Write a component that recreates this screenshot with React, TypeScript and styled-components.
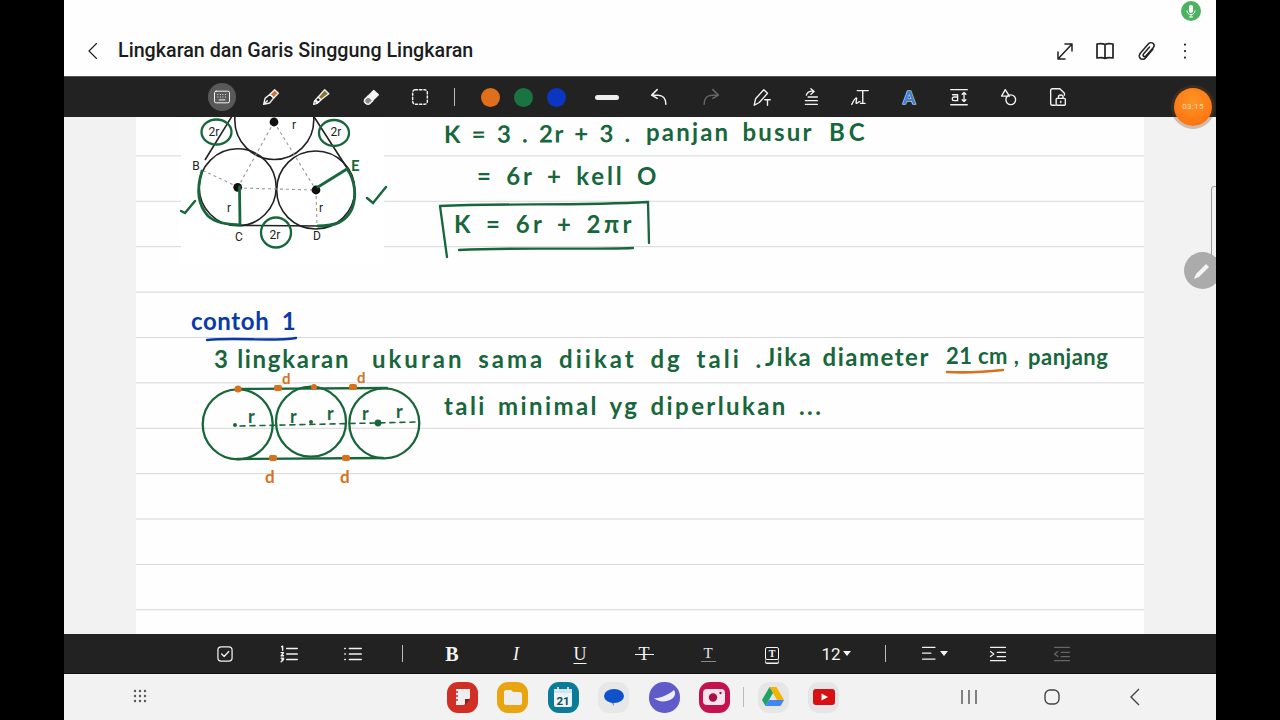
import React from "react";
import styled, { createGlobalStyle } from "styled-components";

const Global = createGlobalStyle`
  html, body { margin: 0; padding: 0; background: #000; width: 1280px; height: 720px; overflow: hidden; }
  #root { width: 1280px; height: 720px; }
`;

const Screen = styled.div`
  width: 1280px; height: 720px; background: #000;
  display: flex; justify-content: center;
  font-family: Roboto, "Liberation Sans", sans-serif;
`;
const Tablet = styled.div`
  position: relative; width: 1152px; height: 720px; overflow: hidden;
  display: flex; flex-direction: column; background: #f2f2f2;
`;
const Header = styled.header`
  height: 76px; flex: none; background: #fefefe; box-sizing: border-box;
  padding: 25px 19px 0 20px; display: flex; align-items: center;
`;
const BackButton = styled.div`
  width: 20px; height: 24px; display: flex; align-items: center; justify-content: center; margin-right: 14px;
`;
const Title = styled.h1`
  margin: 0; font: 500 19.7px/24px Roboto, sans-serif; color: #1c1c1c; flex: 1;
`;
const HeaderActions = styled.div`
  display: flex; align-items: center; gap: 16px;
`;
const HeaderIcon = styled.div<{ $nudge?: number }>`
  width: 24px; height: 24px; display: flex;
  margin-left: ${(p) => p.$nudge ?? 0}px; margin-right: ${(p) => -(p.$nudge ?? 0)}px;
`;
const Toolbar = styled.nav`
  height: 41px; flex: none; background: #222; border-top: 1px solid #555; box-sizing: border-box;
  display: flex; align-items: center; padding-left: 133px;
`;
const Slot = styled.div<{ $w?: number; $ml?: number }>`
  width: ${(p) => p.$w ?? 49.6}px; margin-left: ${(p) => p.$ml ?? 0}px; height: 36px; flex: none;
  display: flex; align-items: center; justify-content: center;
`;
const ActiveKey = styled.div`
  width: 28px; height: 28px; border-radius: 50%; background: #595959;
  display: flex; align-items: center; justify-content: center;
`;
const Swatch = styled.div<{ $c: string }>`
  width: 19px; height: 19px; border-radius: 50%; background: ${(p) => p.$c};
`;
const Divider = styled.div<{ $h?: number }>`
  width: 1px; height: ${(p) => p.$h ?? 18}px; background: #bbb;
`;
const WidthBar = styled.div`
  width: 24px; height: 5px; border-radius: 3px; background: #eee;
`;
const Workspace = styled.main`
  height: 517px; flex: none; display: flex; justify-content: center; background: #f2f2f2;
`;
const Page = styled.section`
  position: relative; width: 1008px; height: 517px; overflow: hidden;
  background-color: #fefefe;
  background-image: linear-gradient(to bottom, transparent 44.2px, #d6d6d6 44.2px, #d6d6d6 45.4px);
  background-size: 100% 45.4px;
  background-position: 0 -6px;
`;
const Patch = styled.div`
  position: absolute; left: 45px; top: 0; width: 203px; height: 148px; background: #fff;
`;
const InkLayer = styled.svg`
  position: absolute; left: 0; top: 0; width: 1008px; height: 517px;
`;
const Ink = styled.span<{ $x: number; $y: number; $s: number; $ls: number; $c?: string; $r?: number; $ws?: number }>`
  position: absolute; left: ${(p) => p.$x - 136}px; top: ${(p) => p.$y - 117}px;
  font: 700 ${(p) => p.$s}px/1 Lato, "Open Sans", sans-serif;
  letter-spacing: ${(p) => p.$ls}px; word-spacing: ${(p) => p.$ws ?? 0}px;
  color: ${(p) => p.$c ?? "#17663c"}; white-space: nowrap;
  transform: rotate(${(p) => p.$r ?? 0}deg); transform-origin: left center;
`;
const FormatBar = styled.nav`
  height: 39px; flex: none; background: #222; border-bottom: 1px solid #111; box-sizing: content-box;
  display: flex; align-items: center; padding-left: 129px;
`;
const FormatSlot = styled.div<{ $w?: number }>`
  width: ${(p) => p.$w ?? 64}px; height: 34px; flex: none; display: flex; align-items: center; justify-content: center;
`;
const Glyph = styled.span<{ $italic?: boolean; $bold?: boolean; $u?: boolean }>`
  font: ${(p) => (p.$italic ? "italic " : "")}${(p) => (p.$bold ? 700 : 400)} ${(p) => (p.$bold ? 20 : 18)}px/20px "Liberation Serif", serif;
  color: #f4f4f4;
  text-decoration: ${(p) => (p.$u ? "underline" : "none")};
  text-underline-offset: 3px;
`;
const StrikeGlyph = styled.span`
  position: relative; font: 400 18px/20px "Liberation Serif", serif; color: #f4f4f4;
  &::after {
    content: ""; position: absolute; left: -4px; right: -4px; top: 10px; height: 1.5px; background: #f4f4f4;
  }
`;
const BoxedGlyph = styled.span`
  display: inline-flex; width: 12px; height: 11px; border: 1.3px solid #f4f4f4; border-radius: 2px;
  align-items: center; justify-content: center; font: 700 10px/1 "Liberation Serif", serif; color: #f4f4f4;
  box-shadow: 0 3px 0 -0.5px #222, 0 4px 0 0 #f4f4f4;
`;
const UnderGlyph = styled.span`
  display: inline-flex; width: 15px; justify-content: center; border-bottom: 1.5px solid #888;
  font: 400 15px/14px "Liberation Serif", serif; color: #e6e6e6; padding-bottom: 1px;
`;
const SizeLabel = styled.span`
  font: 400 17px/20px Roboto, sans-serif; color: #f4f4f4; display: flex; align-items: center; gap: 2px;
`;
const Caret = styled.i`
  width: 0; height: 0; border-left: 4px solid transparent; border-right: 4px solid transparent; border-top: 5px solid #f4f4f4;
`;
const Dock = styled.footer`
  height: 46px; flex: none; background: #f2f2f2; display: flex; align-items: center; padding-left: 66px;
`;
const DockGrid = styled.div`
  width: 22px; flex: none; display: flex; justify-content: center;
`;
const Apps = styled.div`
  display: flex; align-items: center; margin-left: 295px;
`;
const AppTile = styled.div<{ $bg: string; $r?: number }>`
  width: 31px; height: 31px; border-radius: ${(p) => p.$r ?? 11}px; background: ${(p) => p.$bg}; flex: none;
  margin-right: 19.4px; display: flex; align-items: center; justify-content: center; overflow: hidden;
`;
const DockDivider = styled.div`
  width: 1px; height: 20px; background: #bbb; margin: 0 13.5px 0 -6px;
`;
const NavKeys = styled.div`
  display: flex; align-items: center; margin-left: 98.5px; gap: 59px;
`;
const MicDot = styled.div`
  position: absolute; left: 1117px; top: 1px; width: 20px; height: 20px; border-radius: 50%; background: #4cb25f;
  display: flex; align-items: center; justify-content: center;
`;
const TimerBubble = styled.div`
  position: absolute; left: 1110px; top: 88px; width: 38px; height: 38px; border-radius: 50%;
  background: radial-gradient(circle at 50% 35%, #ff9526, #fb6a0c);
  box-shadow: 0 0 0 3px rgba(120, 70, 30, 0.3);
  display: flex; align-items: center; justify-content: center;
  font: 400 8px/1 Roboto, sans-serif; color: #ffd9b3; letter-spacing: 0.3px;
`;
const EdgeHandle = styled.div`
  position: absolute; left: 1147px; top: 186px; width: 12px; height: 72px;
  border: 1px solid #9a9a9a; border-radius: 3px; box-sizing: border-box;
`;
const PenFab = styled.div`
  position: absolute; left: 1120px; top: 252px; width: 37px; height: 37px; border-radius: 50%; background: #ababab;
  display: flex; align-items: center; padding-left: 8px; box-sizing: border-box;
`;

const S = (p: { size?: number; children: React.ReactNode; c?: string; w?: number }) => (
  <svg width={p.size ?? 22} height={p.size ?? 22} viewBox="0 0 24 24" fill="none" stroke={p.c ?? "#f2f2f2"}
    strokeWidth={p.w ?? 1.5} strokeLinecap="round" strokeLinejoin="round">{p.children}</svg>
);

const G = "#17663c";
const O = "#d8701c";

const NoteDrawings = () => (
  <InkLayer viewBox="136 117 1008 517">
    <g fill="none" stroke="#222" strokeWidth="1.6">
      <circle cx="274.3" cy="120" r="39.5" />
      <circle cx="237.7" cy="187.3" r="38.5" />
      <circle cx="315.7" cy="190" r="39" />
      <path d="M231.7 116.7 L205 160 M314 116.7 L348.3 170 M240 225.4 L320 226" />
    </g>
    <g fill="none" stroke="#999" strokeWidth="1.1" strokeDasharray="3 3">
      <path d="M274 122 L238 187 M274 122 L316 190 M238 188 L316 190 M238 187 L204 171 M316 190 L317 225" />
    </g>
    <g fill="#111">
      <circle cx="274" cy="122" r="4.4" /><circle cx="237.7" cy="187.3" r="4.4" /><circle cx="316" cy="190" r="4.4" />
    </g>
    <g fontFamily="Roboto, sans-serif" fontSize="12" fill="#222" textAnchor="middle">
      <text x="196" y="170">B</text><text x="239" y="241">C</text><text x="317" y="240">D</text>
      <text x="229" y="212">r</text><text x="321" y="212">r</text><text x="294" y="129">r</text>
      <text x="214" y="136">2r</text><text x="336" y="136">2r</text><text x="275" y="239">2r</text>
    </g>
    <g fill="none" stroke={G} strokeLinecap="round" strokeWidth="2.3">
      <ellipse cx="216.5" cy="132" rx="15" ry="12.5" />
      <ellipse cx="334" cy="133" rx="15" ry="13" />
      <ellipse cx="276" cy="232.5" rx="15" ry="15" />
      <path d="M202 171 C196 190 198 205 208 216 C217 224 228 224 240 225 L239.5 187" strokeWidth="2.8" />
      <path d="M318 187 L347 169 C355 180 357 196 352 209 C346 222 335 226 318 226" strokeWidth="2.8" />
      <path d="M181 211 L185 213 L195 201 M367 198 L373 203 L386 187" strokeWidth="2.4" />
      <path d="M440 206 L447 257 M440 206 C500 203 580 206 648 202 L649 243 M459 250 C520 247 580 250 633 248" strokeWidth="2.3" />
      <circle cx="237.7" cy="424.3" r="35" />
      <circle cx="311" cy="421.7" r="35" />
      <circle cx="384.3" cy="423.3" r="35" />
      <path d="M238 389 L387 388 M237 459 L383 458" />
      <path d="M240 426 L418 422" strokeDasharray="5 5" strokeWidth="1.6" />
    </g>
    <g fill={G}><circle cx="235" cy="425" r="2" /><circle cx="311" cy="422" r="2" /><circle cx="378" cy="423" r="3.4" /></g>
    <path d="M207 340 C240 337 270 342 296 338" fill="none" stroke="#0a3aa8" strokeWidth="2.4" strokeLinecap="round" />
    <path d="M947 372 C965 373 985 372 1003 370" fill="none" stroke={O} strokeWidth="2.6" strokeLinecap="round" />
    <g fill={O}>
      <circle cx="238" cy="389" r="3.6" /><circle cx="314" cy="387" r="3" />
      <rect x="274" y="385" width="8" height="6" rx="2" /><rect x="349" y="384" width="8" height="6" rx="2" />
      <rect x="269" y="455" width="8" height="6" rx="2" /><rect x="342" y="455" width="8" height="6" rx="2" />
    </g>
  </InkLayer>
);

const Notes = () => (
  <>
    <Ink $x={351} $y={158} $s={15} $ls={0}>E</Ink>
    <Ink $x={444} $y={122} $s={24} $ls={1.7} $ws={2} $r={-0.3}>K = 3 . 2r + 3 .</Ink>
    <Ink $x={646} $y={120} $s={24} $ls={2.2} $ws={4}>panjan busur</Ink>
    <Ink $x={829} $y={120} $s={24} $ls={4}>BC</Ink>
    <Ink $x={477} $y={164} $s={24} $ls={2.8} $ws={4}>= 6r + kell O</Ink>
    <Ink $x={454} $y={212} $s={24} $ls={3.4} $ws={3}>K = 6r + 2πr</Ink>
    <Ink $x={191} $y={309} $s={24} $ls={0.6} $ws={6} $c="#0a3aa8">contoh 1</Ink>
    <Ink $x={214} $y={347} $s={24} $ls={1.7}>3 lingkaran</Ink>
    <Ink $x={372} $y={347} $s={24} $ls={3} $ws={5}>ukuran sama diikat dg tali .</Ink>
    <Ink $x={765} $y={345} $s={24} $ls={1.5} $ws={3}>Jika diameter</Ink>
    <Ink $x={946} $y={345} $s={22} $ls={0.4} $ws={0}>21 cm ,</Ink>
    <Ink $x={1028} $y={346} $s={22} $ls={0.5}>panjang</Ink>
    <Ink $x={444} $y={394} $s={24} $ls={2.4} $ws={3}>tali minimal yg diperlukan ...</Ink>
    <Ink $x={282} $y={371} $s={15} $ls={0} $c={O}>d</Ink>
    <Ink $x={357} $y={370} $s={15} $ls={0} $c={O}>d</Ink>
    <Ink $x={265} $y={468} $s={17} $ls={0} $c={O}>d</Ink>
    <Ink $x={340} $y={468} $s={17} $ls={0} $c={O}>d</Ink>
    <Ink $x={248} $y={407} $s={18} $ls={0}>r</Ink>
    <Ink $x={290} $y={407} $s={18} $ls={0}>r</Ink>
    <Ink $x={327} $y={404} $s={18} $ls={0}>r</Ink>
    <Ink $x={362} $y={404} $s={18} $ls={0}>r</Ink>
    <Ink $x={396} $y={402} $s={18} $ls={0}>r</Ink>
  </>
);

export default function App() {
  return (
    <Screen>
      <Global />
      <Tablet>
        <Header>
          <BackButton>
            <S size={24} c="#222" w={1.4}><path d="M15 3 L6 12 L15 21" /></S>
          </BackButton>
          <Title>Lingkaran dan Garis Singgung Lingkaran</Title>
          <HeaderActions>
            <HeaderIcon><S size={24} c="#222"><path d="M5 20 L19 5 M12 5 H19 V12 M5 13 V20 H12" /></S></HeaderIcon>
            <HeaderIcon><S size={24} c="#222" w={1.7}><path d="M12 5.5 C10 4.5 7 4.5 4 5 V19 C7 18.5 10 18.5 12 19.5 C14 18.5 17 18.5 20 19 V5 C17 4.5 14 4.5 12 5.5 Z M12 5.5 V19.5" /></S></HeaderIcon>
            <HeaderIcon $nudge={2}><S size={24} c="#222"><path d="M18 10 L10.5 19 C8.8 21 6 20.5 5 19 C4 17.5 4.2 15.5 5.5 14 L13.5 4.8 C14.8 3.4 17 3.4 18.2 4.5 C19.4 5.7 19.3 7.6 18 9 L10.8 17 C10 17.8 9 17.7 8.4 17.2 C7.8 16.6 7.9 15.7 8.5 15 L14.5 8" /></S></HeaderIcon>
            <HeaderIcon><S size={24} c="#222" w={2.2}><path d="M12 5.5 V5.6 M12 12 V12.1 M12 18.5 V18.6" /></S></HeaderIcon>
          </HeaderActions>
        </Header>

        <Toolbar>
          <Slot><ActiveKey><S size={20} w={1.2}><rect x="3" y="5" width="18" height="14" rx="2" /><path d="M7 9 H7.1 M10 9 H10.1 M13 9 H13.1 M16 9 H16.1 M7 12 H7.1 M10 12 H10.1 M13 12 H13.1 M16 12 H16.1 M8.5 15.5 H15.5" /></S></ActiveKey></Slot>
          <Slot><S size={22}><path d="M4 20 L5.5 13.5 L11 9 L15 13 L10.5 18.5 Z M4 20 L8 16" /><path d="M11 9 L16 4 L20 8 L15 13 Z" fill="#d0743a" stroke="#f2f2f2" /></S></Slot>
          <Slot><S size={22}><path d="M4 20 L5 16 L8 19 Z M6 15 L9 12 L12 15 L9 18 Z" /><path d="M9 12 L16 4 L20.5 8.5 L12 15 Z" fill="#8a7430" stroke="#f2f2f2" /></S></Slot>
          <Slot><S size={22}><path d="M5 15 L15 5 L20 9.5 L10 19.5 C8.5 20 7 19.5 6 18.5 C5 17.5 4.6 16 5 15 Z" fill="#f4f4f4" /><path d="M9 11 L14 16 L10 19.5 C8.5 20 7 19.5 6 18.5 C5 17.5 4.6 16 5 15 Z" fill="#888" /></S></Slot>
          <Slot><S size={22} w={1.6}><rect x="4" y="4" width="16" height="16" rx="3" strokeDasharray="2.4 2.2" /></S></Slot>
          <Slot $w={20}><Divider /></Slot>
          <Slot $w={33} $ml={8.7}><Swatch $c="#df6f1a" /></Slot>
          <Slot $w={33}><Swatch $c="#1a7441" /></Slot>
          <Slot $w={33}><Swatch $c="#0b36c2" /></Slot>
          <Slot $w={49.6} $ml={10}><WidthBar /></Slot>
          <Slot $w={52} $ml={1}><S size={22} w={1.7}><path d="M4 10 L10 4 M4 10 L10 13.5 M4 10 H11 C16 10 19.5 13.5 19.5 20" /></S></Slot>
          <Slot $w={52}><S size={22} c="#666" w={1.7}><path d="M20 10 L14 4 M20 10 L14 13.5 M20 10 H13 C8 10 4.5 13.5 4.5 20" /></S></Slot>
          <Slot $w={50}><S size={22}><path d="M3.5 21 L5 14 L14 4 L18 8 L9 18 Z" /><path d="M15 15 H21 M18 15 V21" /></S></Slot>
          <Slot $w={50} $ml={-2.5}><S size={22}><path d="M8 10 C9 6 13 5 16 6 M13 3 L16.5 6 L13 9 M10 12 H20 M7 16 H20 M7 20 H20" /></S></Slot>
          <Slot $w={49.6}><S size={22}><path d="M9 5 H21 M15 5 V19 M12.5 19 H17.5 M3 20 C5 16 7 13 8 13 C9 13 7 19 8 19 C9 19 10 17 12 17" /></S></Slot>
          <Slot $w={49.6}><svg width="22" height="24" viewBox="0 0 22 24"><text x="11" y="19" textAnchor="middle" fontFamily="Liberation Sans, sans-serif" fontWeight="700" fontSize="19" fill="#3d80d8" stroke="#f4f4f4" strokeWidth="1" paintOrder="stroke">A</text></svg></Slot>
          <Slot $w={49.6}><S size={22}><path d="M3 4 H21 M3 20.5 H21 M17.5 7 V17 M15.5 9 L17.5 7 L19.5 9 M15.5 15 L17.5 17 L19.5 15" /><path d="M5 9.5 H10.5 V16 M10.5 12 H6.5 C4 12 4 16 6.5 16 H10.5" /></S></Slot>
          <Slot $w={49.6}><S size={22}><path d="M9 4 L13.5 11 H5 Z" /><circle cx="15" cy="15" r="5.3" /></S></Slot>
          <Slot $w={49.6}><S size={22}><path d="M9 21 H6 C5 21 4 20 4 19 V5 C4 4 5 3 6 3 H14 L19 8 V10" /><rect x="10" y="13.5" width="10" height="7.5" rx="1" /><path d="M12.5 13.5 V12 C12.5 9 17.5 9 17.5 12 V13.5 M15 16.5 V18" /></S></Slot>
        </Toolbar>

        <Workspace>
          <Page>
            <Patch />
            <NoteDrawings />
            <Notes />
          </Page>
        </Workspace>

        <FormatBar>
          <FormatSlot><S size={20}><rect x="3.5" y="3.5" width="17" height="17" rx="4" /><path d="M8 12 L11 15 L16.5 9" /></S></FormatSlot>
          <FormatSlot><S size={22} w={1.6}><path d="M9.5 6 H21 M9.5 12 H21 M9.5 18 H21 M4 4 L5 3.5 V8 M3.5 10.5 H6 L3.5 14 H6 M3.5 16.5 H6 L4.5 18 H6 L3.5 20.5" /></S></FormatSlot>
          <FormatSlot><S size={22} w={1.6}><path d="M8 6 H21 M8 12 H21 M8 18 H21 M3 6 H3.6 M3 12 H3.6 M3 18 H3.6" /></S></FormatSlot>
          <FormatSlot $w={35}><Divider $h={17} /></FormatSlot>
          <FormatSlot><Glyph $bold>B</Glyph></FormatSlot>
          <FormatSlot><Glyph $italic>I</Glyph></FormatSlot>
          <FormatSlot><Glyph $u>U</Glyph></FormatSlot>
          <FormatSlot><StrikeGlyph>T</StrikeGlyph></FormatSlot>
          <FormatSlot><UnderGlyph>T</UnderGlyph></FormatSlot>
          <FormatSlot><BoxedGlyph>T</BoxedGlyph></FormatSlot>
          <FormatSlot><SizeLabel>12<Caret /></SizeLabel></FormatSlot>
          <FormatSlot $w={34}><Divider $h={17} /></FormatSlot>
          <FormatSlot><S size={20}><path d="M3 4 H18 M3 11 H13 M3 18 H18" /></S><Caret /></FormatSlot>
          <FormatSlot><S size={20}><path d="M3 4 H21 M3 20 H21 M11 10 H21 M11 15 H21 M3 9 L7 12 L3 15" /></S></FormatSlot>
          <FormatSlot><S size={20} c="#666"><path d="M3 4 H21 M3 20 H21 M11 10 H21 M11 15 H21 M7 9 L3 12 L7 15" /></S></FormatSlot>
        </FormatBar>

        <Dock>
          <DockGrid>
            <svg width="16" height="16" viewBox="0 0 16 16" fill="#555">
              {[1.5, 6.5, 11.5].flatMap((y) => [1.5, 6.5, 11.5].map((x) => <circle key={`${x}-${y}`} cx={x + 0.5} cy={y + 0.5} r="1.2" />))}
            </svg>
          </DockGrid>
          <Apps>
            <AppTile $bg="#d12f26">
              <svg width="22" height="22" viewBox="0 0 22 22"><path d="M4 3 H18 V12 L12 19 H4 Z" fill="#eee" /><path d="M13 13 H18 L13 19 Z" fill="#8d1d16" /><path d="M3 6 H6 M3 10 H6 M3 14 H6" stroke="#d12f26" strokeWidth="1.5" /></svg>
            </AppTile>
            <AppTile $bg="#e9a511">
              <svg width="22" height="20" viewBox="0 0 22 20"><path d="M2 5 C2 4 3 3 4 3 H9 L11 5 H18 C19 5 20 6 20 7 V16 C20 17 19 18 18 18 H4 C3 18 2 17 2 16 Z" fill="#eee" /></svg>
            </AppTile>
            <AppTile $bg="#0b7c98">
              <svg width="22" height="24" viewBox="0 0 22 24"><rect x="2" y="4" width="18" height="18" rx="2" fill="#eef4f6" /><rect x="2" y="4" width="18" height="4" fill="#cfe3ea" /><path d="M6 2 V6 M16 2 V6" stroke="#eef4f6" strokeWidth="1.6" /><text x="11" y="19.5" textAnchor="middle" fontFamily="Roboto, sans-serif" fontWeight="700" fontSize="11.5" fill="#0f4e62">21</text></svg>
            </AppTile>
            <AppTile $bg="#e7e7e7">
              <svg width="22" height="24" viewBox="0 0 22 24"><path d="M11 16 L11 21 L7 16 Z" fill="#6a9bf0" /><ellipse cx="11" cy="11" rx="10" ry="7" fill="#0f52ca" /></svg>
            </AppTile>
            <AppTile $bg="#5f5bc8" $r={15}>
              <svg width="26" height="26" viewBox="0 0 26 26"><path d="M3 14 C8 15 17 11 23 6 C25 9 24 12 22 14 C17 18 8 19 3 14 Z" fill="#eef" /></svg>
            </AppTile>
            <AppTile $bg="#c4124f">
              <svg width="24" height="20" viewBox="0 0 24 20"><rect x="1" y="2" width="22" height="16" rx="4" fill="#fbe3ea" /><circle cx="11" cy="10.5" r="4.2" fill="#a90f47" /><circle cx="18.5" cy="6" r="1.2" fill="#a90f47" /></svg>
            </AppTile>
            <DockDivider />
            <AppTile $bg="#e6e6e6">
              <svg width="24" height="22" viewBox="0 0 24 22"><path d="M8.5 1 H15.5 L23 14 H16 Z" fill="#f4b400" /><path d="M8.5 1 L1 14 L4.5 20 L12 7 Z" fill="#1ea362" /><path d="M4.5 20 H19.5 L23 14 H8 Z" fill="#4285f4" /></svg>
            </AppTile>
            <AppTile $bg="#e6e6e6">
              <svg width="22" height="16" viewBox="0 0 22 16"><rect x="0" y="0" width="22" height="16" rx="3" fill="#d90f12" /><path d="M8.5 4.5 L15 8 L8.5 11.5 Z" fill="#fff" /></svg>
            </AppTile>
          </Apps>
          <NavKeys>
            <svg width="24" height="24" viewBox="0 0 24 24" stroke="#444" strokeWidth="1.3"><path d="M5 5 V19 M12 5 V19 M19 5 V19" /></svg>
            <svg width="24" height="24" viewBox="0 0 24 24" fill="none" stroke="#444" strokeWidth="1.4"><rect x="5" y="5" width="14" height="14" rx="5" /></svg>
            <svg width="24" height="24" viewBox="0 0 24 24" fill="none" stroke="#444" strokeWidth="1.4"><path d="M16 4 L8 12 L16 20" /></svg>
          </NavKeys>
        </Dock>

        <MicDot>
          <svg width="14" height="14" viewBox="0 0 14 14" fill="#fff"><rect x="5" y="1" width="4" height="8" rx="2" /><path d="M3 6.5 C3 12 11 12 11 6.5 M7 10 V13 M5 13 H9" stroke="#fff" fill="none" strokeWidth="1" /></svg>
        </MicDot>
        <TimerBubble>03:15</TimerBubble>
        <EdgeHandle />
        <PenFab>
          <svg width="20" height="20" viewBox="0 0 20 20" fill="#f4f4f4"><path d="M2 18 L4 13 L14 3 L17 6 L7 16 Z" /></svg>
        </PenFab>
      </Tablet>
    </Screen>
  );
}
